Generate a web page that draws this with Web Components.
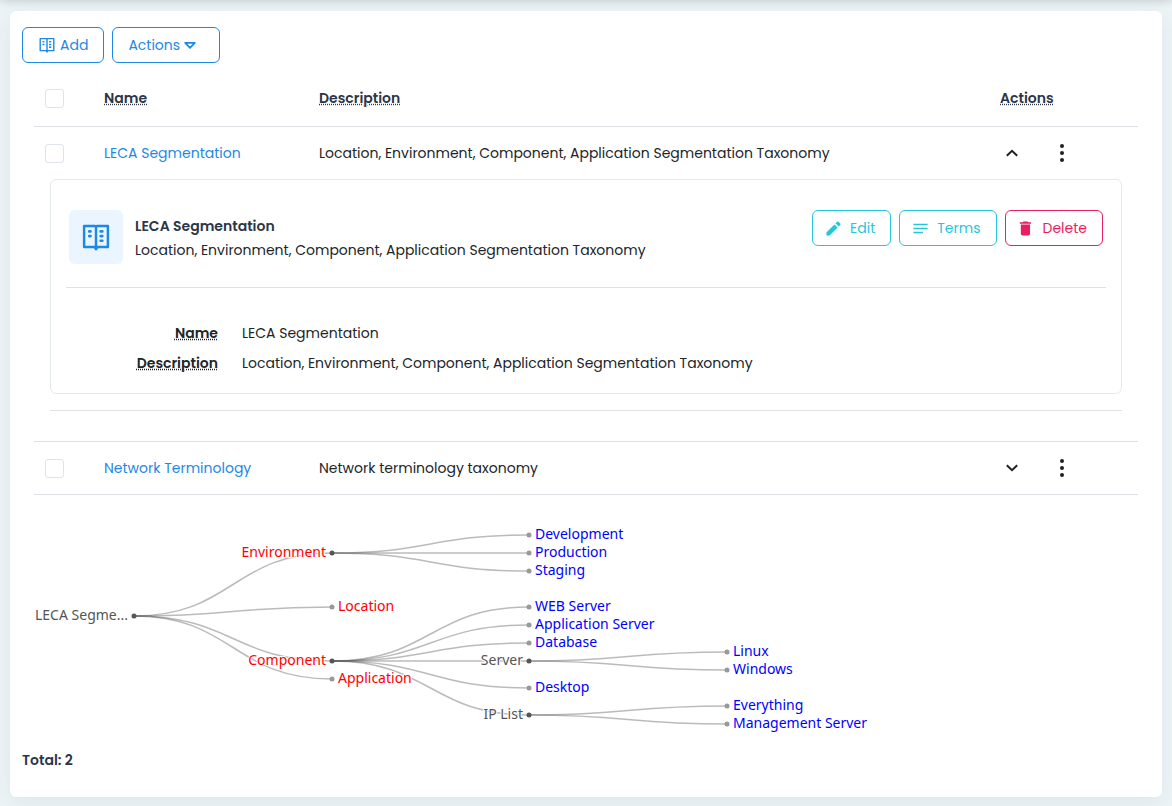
<!DOCTYPE html>
<html lang="en">
<head>
<meta charset="utf-8">
<meta name="viewport" content="width=device-width, initial-scale=1">
<title>Taxonomies</title>
<style>
body{margin:0;background:#edf4f7;color:#212529;font:14px/24px Poppins,Inter,"Open Sans",sans-serif}
</style>
</head>
<body>
<taxonomy-page>
  <tool-bar slot="toolbar">
    <outline-button icon="book" compact>Add</outline-button>
    <outline-button caret>Actions</outline-button>
  </tool-bar>
  <taxonomy-table>
    <taxonomy-detail slot="detail" name="LECA Segmentation" description="Location, Environment, Component, Application Segmentation Taxonomy">
      <outline-button icon="pencil" tone="info">Edit</outline-button>
      <outline-button icon="lines" tone="info">Terms</outline-button>
      <outline-button icon="trash" tone="danger">Delete</outline-button>
    </taxonomy-detail>
  </taxonomy-table>
  <term-tree></term-tree>
  <span slot="footer">Total: 2</span>
</taxonomy-page>

<script>
const ICONS = {
  book: '<svg viewBox="0 0 24 24" fill="none" stroke="currentColor" stroke-width="2.1" stroke-linejoin="round" stroke-linecap="round"><path d="M1.8 2.5H10.7L12 3.3L13.3 2.5H22.2V20.5H13.2L12 22.5L10.8 20.5H1.8ZM12 3.3V22.5"/><path d="M6.2 7.2H7.3M6.2 11.2H7.3M16 7.2H17.4M16 11.2H17.4M16 15.2H17.4" stroke-width="2.3"/></svg>',
  pencil: '<svg viewBox="0 0 24 24" fill="currentColor"><path d="M2 17.5V22h4.5L17.8 10.7l-4.500-4.500zM21.600 6.900a1.300 1.300 0 0 0 0-1.800l-2.700-2.700a1.300 1.300 0 0 0-1.800 0l-2.300 2.300 4.500 4.500z"/></svg>',
  lines: '<svg viewBox="0 0 24 24" fill="none" stroke="currentColor" stroke-width="2.1"><path d="M2 6.300H22M2 12H22M2 17.500H15.500"/></svg>',
  trash: '<svg viewBox="0 0 24 24" fill="currentColor"><path d="M4 6.500v13a2.500 2.500 0 0 0 2.500 2.500h8a2.500 2.500 0 0 0 2.500-2.500v-13zM18.500 3h-4l-1.200-1h-5.600l-1.200 1H2.500v2.200h16z"/></svg>'
};

class BaseElement extends HTMLElement {
  connectedCallback() {
    if (this.shadowRoot) return;
    this.attachShadow({ mode: 'open' }).innerHTML = this.render();
  }
}

customElements.define('outline-button', class extends BaseElement {
  render() {
    const icon = this.getAttribute('icon');
    return `<style>
      :host{display:block;color:#1e88e5}
      :host([tone=info]){color:#26c6da}
      :host([tone=danger]){color:#e91e63}
      button{display:flex;align-items:center;gap:8px;box-sizing:border-box;height:36px;padding:0 15px 0 12px;border:1px solid currentColor;border-radius:6px;background:#fff;color:inherit;font:inherit;cursor:pointer}
      :host([compact]) button{gap:5px;padding:0 15px 0 16px}
      :host([caret]) button{gap:4px;padding:0 23px 0 15px}
      svg{display:block;width:16px;height:16px}
      :host([tone]) svg{width:17px;height:17px}
      .caret{width:12px;height:8px}
    </style>
    <button type="button">${icon ? ICONS[icon] : ''}<slot></slot>${this.hasAttribute('caret') ? '<svg class="caret" viewBox="0 0 12 8" fill="none" stroke="currentColor" stroke-width="1.8" stroke-linejoin="round"><path d="M1.200 1.900H10.800L6 6.800Z"/></svg>' : ''}</button>`;
  }
});

customElements.define('tool-bar', class extends BaseElement {
  render() {
    return `<style>:host{display:flex;gap:8px}</style><slot></slot>`;
  }
});

customElements.define('taxonomy-page', class extends BaseElement {
  render() {
    return `<style>
      :host{display:block;padding:11px 10px 9px}
      .shade{position:absolute;top:-4px;left:0;right:0;height:4px;box-shadow:0 0 9px rgba(0,0,0,.3)}
      main{padding:16px 12px 25px;border-radius:6px;background:#fff;box-shadow:0 6px 22px rgba(40,60,60,.07)}
      .content{padding:7px 12px 0}
      footer{color:#2b3648;font-weight:600}
    </style>
    <div class="shade"></div>
    <main>
      <slot name="toolbar"></slot>
      <div class="content"><slot></slot></div>
      <footer><slot name="footer"></slot></footer>
    </main>`;
  }
});

customElements.define('taxonomy-table', class extends BaseElement {
  row(name, description, open) {
    return `<tr>
      <td class="pick"><input type="checkbox" aria-label="Select ${name}"></td>
      <td><a href="#">${name}</a></td>
      <td>${description}</td>
      <td><div class="tools">
        <button type="button" aria-label="${open ? 'Collapse' : 'Expand'}" aria-expanded="${open}"><svg width="12" height="8" viewBox="0 0 12 8" fill="none" stroke="currentColor" stroke-width="2"><path d="${open ? 'M.8 6.8 6 1.8 11.2 6.8' : 'M.8 1.2 6 6.2 11.2 1.2'}"/></svg></button>
        <button type="button" aria-label="More actions"><svg width="4" height="18" viewBox="0 0 4 18" fill="currentColor"><circle cx="2" cy="2" r="2"/><circle cx="2" cy="9" r="2"/><circle cx="2" cy="16" r="2"/></svg></button>
      </div></td>
    </tr>`;
  }
  render() {
    return `<style>
      :host{display:block}
      table{width:100%;table-layout:fixed;border-collapse:separate;border-spacing:0}
      .c1{width:58px}.c2{width:215px}.c4{width:150px}
      th,td{padding:14px 12px;text-align:left}
      th{height:28px;color:#2b3648;font-weight:600;border-bottom:1px solid #dee2e6}
      td{height:24px}
      abbr{text-decoration:underline dotted}
      a{color:#1e88e5;text-decoration:none}
      input{display:block;appearance:none;box-sizing:border-box;width:19px;height:19px;margin:0;border:1px solid #dfe3ee;border-radius:3px;background:#fff}
      th.pick,td.pick{padding-left:11px}
      .tools{display:flex;gap:26px}
      .tools button{display:grid;place-items:center;width:24px;height:24px;padding:0;border:0;background:none;color:#212121}
      td.detail{padding:0 16px 30px;border-bottom:1px solid #dee2e6}
      tr:last-child td{border-bottom:1px solid #dee2e6}
    </style>
    <table>
      <colgroup><col class="c1"><col class="c2"><col><col class="c4"></colgroup>
      <thead><tr>
        <th class="pick"><input type="checkbox" aria-label="Select all"></th>
        <th><abbr>Name</abbr></th><th><abbr>Description</abbr></th><th><abbr>Actions</abbr></th>
      </tr></thead>
      <tbody>
        ${this.row('LECA Segmentation', 'Location, Environment, Component, Application Segmentation Taxonomy', true)}
        <tr><td class="detail" colspan="4"><slot name="detail"></slot></td></tr>
        ${this.row('Network Terminology', 'Network terminology taxonomy', false)}
      </tbody>
    </table>`;
  }
});

customElements.define('taxonomy-detail', class extends BaseElement {
  render() {
    const name = this.getAttribute('name'), description = this.getAttribute('description');
    return `<style>
      :host{display:block;padding-bottom:16px;border-bottom:1px solid #dee2e6}
      article{padding:30px 15px 18px;border:1px solid #e4e9ee;border-radius:6px}
      header{display:flex;align-items:flex-start;gap:12px;padding:0 3px 23px;border-bottom:1px solid #dee2e6}
      .tile{display:grid;place-items:center;width:54px;height:54px;border-radius:6px;background:#ebf5ff;color:#1e88e5}
      .tile svg{width:28px;height:28px}
      .text{flex:1;padding-top:4px}
      h2{margin:0;font:inherit;font-weight:600;color:#2b3648}
      p{margin:0}
      .buttons{display:flex;gap:8px}
      dl{display:grid;grid-template-columns:152px 1fr;gap:6px 24px;margin:33px 0 0}
      dt{text-align:right;font-weight:600}
      dd{margin:0}
      abbr{text-decoration:underline dotted}
    </style>
    <article>
      <header>
        <div class="tile">${ICONS.book}</div>
        <div class="text"><h2>${name}</h2><p>${description}</p></div>
        <div class="buttons"><slot></slot></div>
      </header>
      <dl>
        <dt><abbr>Name</abbr></dt><dd>${name}</dd>
        <dt><abbr>Description</abbr></dt><dd>${description}</dd>
      </dl>
    </article>`;
  }
});

const TREE = {
  name: 'LECA Segme...', y: 113, children: [
    { name: 'Environment', y: 50, kind: 'group', children: [
      { name: 'Development', y: 32 }, { name: 'Production', y: 50 }, { name: 'Staging', y: 68 }] },
    { name: 'Location', y: 104, kind: 'group' },
    { name: 'Component', y: 158, kind: 'group', children: [
      { name: 'WEB Server', y: 104 }, { name: 'Application Server', y: 122 }, { name: 'Database', y: 140 },
      { name: 'Server', y: 158, children: [{ name: 'Linux', y: 149 }, { name: 'Windows', y: 167 }] },
      { name: 'Desktop', y: 185 },
      { name: 'IP List', y: 212, children: [{ name: 'Everything', y: 203 }, { name: 'Management Server', y: 221 }] }] },
    { name: 'Application', y: 176, kind: 'group' }]
};

customElements.define('term-tree', class extends BaseElement {
  render() {
    const LEVELS = [100, 298, 495, 693];
    let edges = '', nodes = '';
    const visit = (node, depth) => {
      const x = LEVELS[depth], leaf = !node.children;
      const kind = node.kind || (leaf ? 'term' : 'branch');
      nodes += `<circle class="${leaf ? 'leaf' : 'open'}" cx="${x}" cy="${node.y}" r="2.5"/>`;
      nodes += `<text class="${kind}" x="${leaf ? x + 6 : x - 6}" y="${node.y + 4}" text-anchor="${leaf ? 'start' : 'end'}">${node.name}</text>`;
      for (const child of node.children || []) {
        const cx = LEVELS[depth + 1], mid = (x + cx) / 2;
        edges += `<path d="M${x} ${node.y}C${mid} ${node.y} ${mid} ${child.y} ${cx} ${child.y}"/>`;
        visit(child, depth + 1);
      }
    };
    visit(TREE, 0);
    return `<style>
      :host{display:block;padding:8px 0 0}
      svg{display:block;width:100%;height:245px;font:14px "Noto Sans",sans-serif}
      path{fill:none;stroke:#555;stroke-opacity:.4;stroke-width:1.5}
      .leaf{fill:#999}.open{fill:#555}
      text{paint-order:stroke;stroke:#fff;stroke-width:2px;stroke-linejoin:round}
      .group{fill:#f00}.term{fill:#00f}.branch{fill:#555}
    </style>
    <svg role="img" aria-label="Taxonomy terms">${edges}${nodes}</svg>`;
  }
});
</script>
</body>
</html>
